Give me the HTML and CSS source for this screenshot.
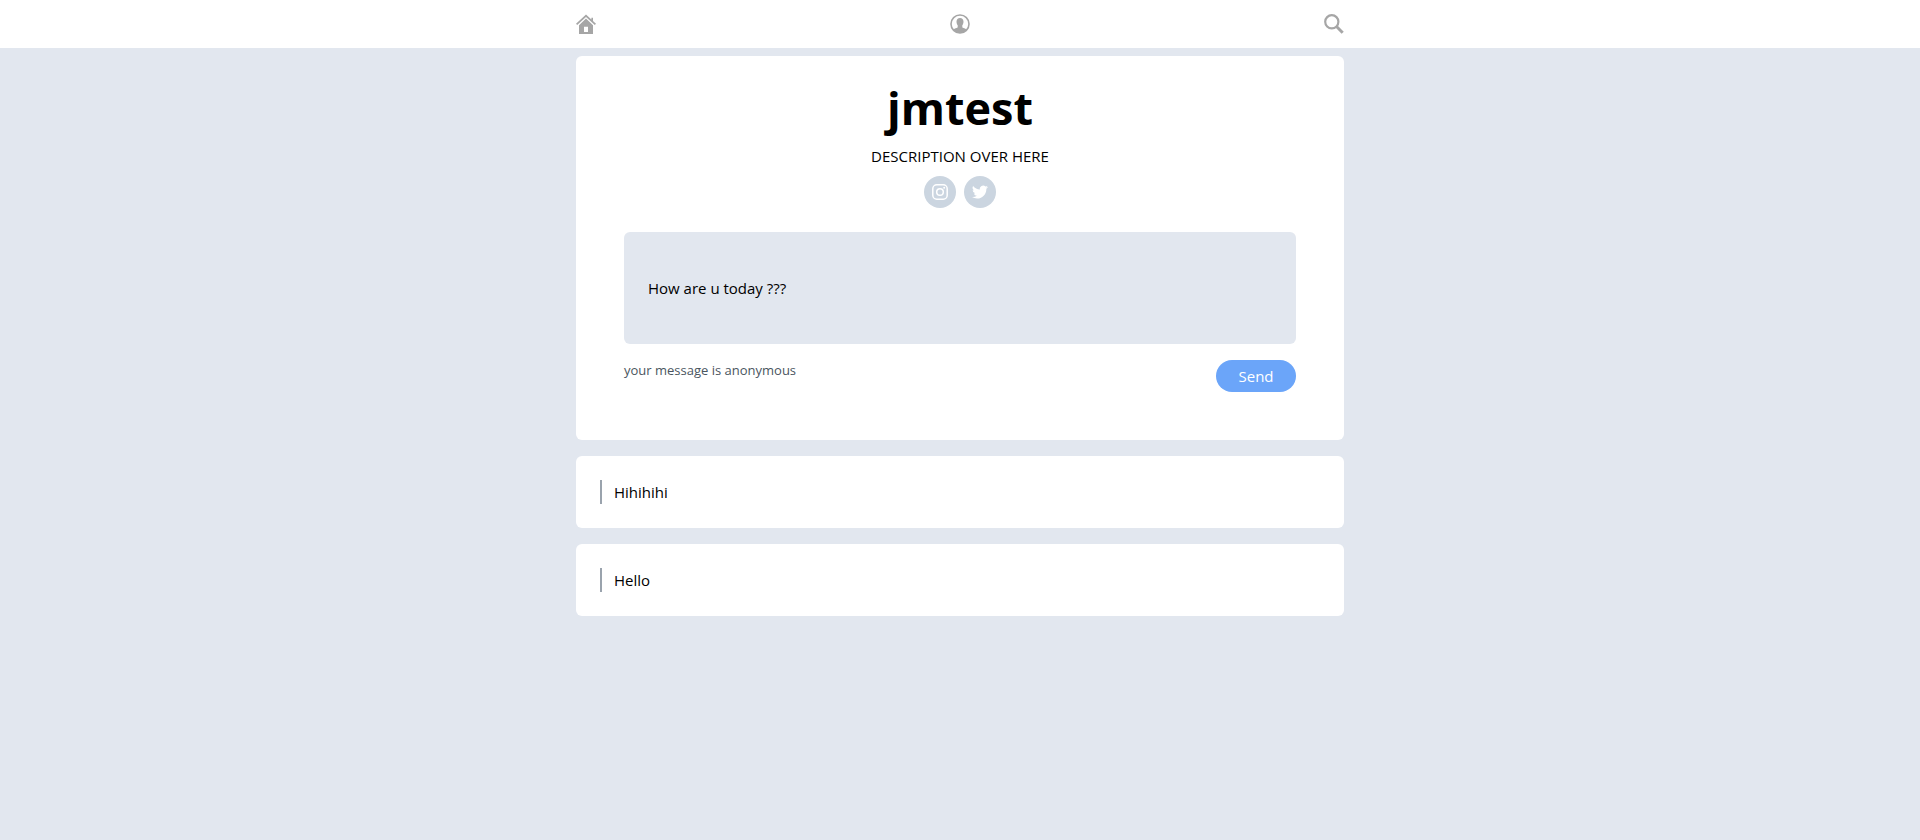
FILE: index.html
```
<!DOCTYPE html>
<html lang="en">
<head>
<meta charset="utf-8">
<meta name="viewport" content="width=device-width, initial-scale=1">
<title>jmtest</title>
<link rel="stylesheet" href="styles.css">
</head>
<body>
<header class="navbar">
  <nav class="container navbar-inner">
    <a class="nav-link" href="#home" aria-label="Home">
      <svg class="nav-icon" viewBox="0 0 20 20" fill="currentColor"><path d="M10 .6 0 9.800l1.200 1.300L10 3l8.800 8.100L20 9.800l-3-2.800V3.800h-1.600v1.700z"/><path d="M10 4.600 3 11.200V20h14v-8.800zM8 12.700h4V18H8z" fill-rule="evenodd"/></svg>
    </a>
    <a class="nav-link" href="#profile" aria-label="Profile">
      <svg class="nav-icon" viewBox="0 0 20 20"><circle cx="10" cy="10" r="9" fill="none" stroke="currentColor" stroke-width="1.600"/><path fill="currentColor" d="M10 4c2.200 0 3.500 1.500 3.500 3.700 0 1.500-.6 2.800-1.200 3.600v1.900c0 .8 3.700 1.300 4.500 2.400A9 9 0 0 1 10 19a9 9 0 0 1-6.800-3.400c.8-1.100 4.500-1.600 4.500-2.400v-1.900c-.6-.8-1.200-2.100-1.200-3.600C6.500 5.500 7.800 4 10 4z"/></svg>
    </a>
    <a class="nav-link" href="#search" aria-label="Search">
      <svg class="nav-icon" viewBox="0 0 20 20" fill="none" stroke="currentColor"><circle cx="7.800" cy="7.800" r="6.600" stroke-width="2.200"/><path d="m12.500 12.500 6.200 6.200" stroke-width="3"/></svg>
    </a>
  </nav>
</header>
<main class="container feed">
  <section class="card profile">
    <h1 class="profile-name">jmtest</h1>
    <p class="profile-description">DESCRIPTION OVER HERE</p>
    <div class="socials">
      <a class="social" href="#instagram" aria-label="Instagram">
        <svg class="social-icon" viewBox="0 0 16 16" fill="none" stroke="currentColor"><rect x=".8" y=".8" width="14.400" height="14.400" rx="4" stroke-width="1.500"/><circle cx="8" cy="8" r="3.300" stroke-width="1.500"/><circle cx="12.200" cy="3.800" r="1" fill="currentColor" stroke="none"/></svg>
      </a>
      <a class="social" href="#twitter" aria-label="Twitter">
        <svg class="social-icon" viewBox="0 0 24 24" fill="currentColor"><path d="M24 4.560a9.800 9.800 0 0 1-2.830.780 4.930 4.930 0 0 0 2.170-2.730 9.900 9.900 0 0 1-3.130 1.200 4.920 4.920 0 0 0-8.390 4.480A13.980 13.980 0 0 1 1.670 3.150a4.920 4.920 0 0 0 1.520 6.570 4.900 4.900 0 0 1-2.230-.610v.060a4.930 4.930 0 0 0 3.950 4.830 5 5 0 0 1-2.220.080 4.930 4.930 0 0 0 4.600 3.420A9.900 9.900 0 0 1 0 19.540a13.940 13.940 0 0 0 7.550 2.210c9.140 0 14.310-7.720 13.980-14.640A10 10 0 0 0 24 4.560z"/></svg>
      </a>
    </div>
    <form class="ask">
      <input class="ask-input" type="text" value="How are u today ???" aria-label="Message">
      <div class="ask-footer">
        <p class="ask-note">your message is anonymous</p>
        <button class="ask-send" type="button">Send</button>
      </div>
    </form>
  </section>
  <article class="card post"><p class="post-text">Hihihihi</p></article>
  <article class="card post"><p class="post-text">Hello</p></article>
</main>
</body>
</html>
```
FILE: styles.css
```
* {
  box-sizing: border-box;
}

body {
  margin: 0;
  min-height: 100vh;
  background: #e2e7ef;
  color: #000;
  font-family: "Open Sans", "Noto Sans", sans-serif;
  font-size: 15px;
  line-height: 24px;
}

h1,
p {
  margin: 0;
}

svg {
  display: block;
}

.container {
  width: 100%;
  max-width: 768px;
  margin: 0 auto;
}

.navbar {
  background: #fff;
}

.navbar-inner {
  display: flex;
  align-items: center;
  justify-content: space-between;
  height: 48px;
}

.nav-link {
  color: #a6a6a6;
}

.nav-icon {
  width: 20px;
  height: 20px;
}

.feed {
  display: flex;
  flex-direction: column;
  gap: 16px;
  padding: 8px 0;
}

.card {
  background: #fff;
  border-radius: 6px;
}

.profile {
  padding: 16px 48px 48px;
  text-align: center;
}

.profile-name {
  font-size: 45px;
  font-weight: 700;
  line-height: 72px;
}

.profile-description {
  font-size: 15px;
}

.socials {
  display: flex;
  justify-content: center;
  gap: 8px;
  padding: 8px 0 24px;
}

.social {
  display: grid;
  place-items: center;
  width: 32px;
  height: 32px;
  border-radius: 50%;
  background: #cbd5e0;
  color: #fff;
}

.social-icon {
  width: 16px;
  height: 16px;
}

.ask-input {
  display: block;
  width: 100%;
  height: 112px;
  padding: 24px;
  border: 0;
  border-radius: 6px;
  background: #e2e7ef;
  color: inherit;
  font: inherit;
}

.ask-footer {
  display: flex;
  align-items: flex-start;
  justify-content: space-between;
  padding-top: 16px;
}

.ask-note {
  color: #4a5560;
  font-size: 13px;
  line-height: 20px;
}

.ask-send {
  width: 80px;
  height: 32px;
  padding: 0;
  border: 0;
  border-radius: 16px;
  background: #6ba5f9;
  color: #fff;
  font: inherit;
  cursor: pointer;
}

.post {
  padding: 24px;
}

.post-text {
  padding-left: 12px;
  border-left: 2px solid #9aa3ad;
}
```
